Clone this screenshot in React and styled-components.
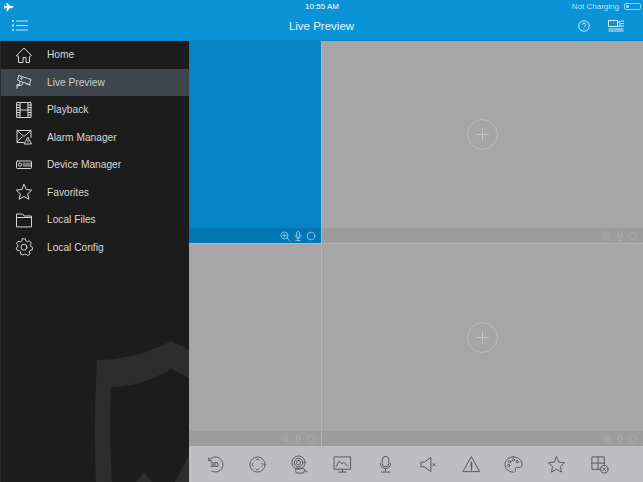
import React from 'react';
import styled, { createGlobalStyle } from 'styled-components';
import { Plane } from 'lucide-react';

const GlobalStyle = createGlobalStyle`
  html, body {
    margin: 0;
    padding: 0;
    background: #a6a6a6;
    overflow: hidden;
  }
  * {
    box-sizing: border-box;
  }
`;

const Page = styled.div`
  width: 643px;
  height: 482px;
  display: flex;
  flex-direction: column;
  font-family: 'Liberation Sans', Arial, sans-serif;
  overflow: hidden;
`;

const Header = styled.header`
  height: 41px;
  flex: none;
  background: #0a94d7;
  color: #fff;
  display: flex;
  flex-direction: column;
  border-bottom: 1px solid #0a86c4;
`;

const StatusBar = styled.div`
  height: 13px;
  padding: 0 2px 0 3px;
  display: grid;
  grid-template-columns: 1fr auto 1fr;
  align-items: center;
  font-size: 8px;
`;

const StatusPlane = styled(Plane)`
  transform: rotate(45deg);
`;

const StatusRight = styled.div`
  display: flex;
  align-items: center;
  justify-content: flex-end;
  gap: 5px;
  color: #b9e0f3;
`;

const Battery = styled.span`
  width: 17px;
  height: 7px;
  border: 1px solid #8fcdea;
  border-radius: 2px;
  padding: 1px;
  display: flex;

  &::before {
    content: '';
    width: 3px;
    background: #8fcdea;
  }
`;

const NavBar = styled.div`
  flex: 1;
  display: grid;
  grid-template-columns: 1fr auto 1fr;
  align-items: center;
  padding: 0 19px 2px;
`;

const MenuButton = styled.svg`
  width: 17px;
  height: 13px;
  margin-left: -8px;
  stroke: #bfe3f5;
  fill: #e6f5fc;
`;

const Title = styled.div`
  font-size: 11.5px;
  line-height: 14px;
  color: #e9f6fc;
`;

const NavActions = styled.div`
  display: flex;
  justify-content: flex-end;
  align-items: center;
  gap: 18px;
`;

const Body = styled.div`
  flex: 1;
  display: flex;
  min-height: 0;
`;

const Sidebar = styled.aside`
  width: 189px;
  flex: none;
  background: #1c1c1d;
  border-left: 1px solid #2c2c2c;
  position: relative;
  overflow: hidden;
`;

const Menu = styled.nav`
  position: relative;
  display: flex;
  flex-direction: column;
`;

const MenuItem = styled.div`
  height: 27.5px;
  display: flex;
  align-items: center;
  gap: 14px;
  padding-left: 14px;
  font-size: 10.2px;
  color: ${(p) => (p.$active ? '#c8cccf' : '#d8d8d8')};
  background: ${(p) => (p.$active ? '#3e464b' : 'transparent')};
`;

const MenuIcon = styled.svg`
  width: 18px;
  height: 18px;
  flex: none;
  fill: none;
  stroke: #d4d4d4;
  stroke-width: 1;
  stroke-linejoin: round;
  stroke-linecap: round;
`;

const Shield = styled.svg`
  position: absolute;
  left: -1px;
  top: 0;
  width: 189px;
  height: 441px;
  fill: #2d2d2d;
`;

const Main = styled.main`
  flex: 1;
  display: flex;
  flex-direction: column;
  min-width: 0;
`;

const Grid = styled.div`
  flex: 1;
  display: grid;
  grid-template-columns: 132px 1fr;
  grid-template-rows: 1fr 1fr;
  gap: 1px;
  background: #b4b4b4;
  min-height: 0;
`;

const Cell = styled.div`
  display: flex;
  flex-direction: column;
  min-height: 0;
`;

const CellView = styled.div`
  flex: 1;
  display: flex;
  align-items: center;
  justify-content: center;
  background: ${(p) => (p.$selected ? '#0385c5' : '#a6a6a6')};
`;

const AddButton = styled.div`
  width: 31px;
  height: 31px;
  border-radius: 50%;
  border: 1px solid #bbbbbb;
  display: flex;
  align-items: center;
  justify-content: center;
  color: #c2c2c2;

  &::before {
    content: '';
    width: 13px;
    height: 13px;
    background:
      linear-gradient(currentColor, currentColor) center / 13px 1px no-repeat,
      linear-gradient(currentColor, currentColor) center / 1px 13px no-repeat;
  }
`;

const CellStrip = styled.div`
  height: 15px;
  flex: none;
  display: flex;
  align-items: center;
  justify-content: flex-end;
  gap: 3px;
  padding-right: 5px;
  background: ${(p) => (p.$selected ? '#0377b2' : '#9c9c9c')};
`;

const StripIcon = styled.svg`
  width: 10px;
  height: 10px;
  fill: none;
  stroke: ${(p) => (p.$selected ? '#7fc2e2' : '#a9a9a9')};
  stroke-width: 1;
  stroke-linecap: round;
`;

const Toolbar = styled.div`
  height: 36px;
  flex: none;
  background: #bdbdc2;
  display: grid;
  grid-template-columns: repeat(10, 42.8px);
  align-items: center;
  justify-items: center;
  padding-left: 4px;
`;

const ToolIcon = styled.svg`
  width: 19px;
  height: 19px;
  fill: none;
  stroke: #55565a;
  stroke-width: 1;
  stroke-linecap: round;
  stroke-linejoin: round;
`;

const ToolLabel = styled.text`
  font-family: 'Liberation Sans', Arial, sans-serif;
  font-size: 7px;
  font-weight: 700;
  fill: #55565a;
  stroke: none;
`;

const menu = [
  {
    label: 'Home',
    icon: <path d="M1.500 9.500 9 2l7.500 7.500-2 1.200V16.500h-3.500v-5h-3v5H3.500v-5.800z" />,
  },
  {
    label: 'Live Preview',
    active: true,
    icon: (
      <>
        <path d="M4 2.500l12 4-1.500 5-11.500-4z" />
        <path d="M6.500 4.800a.8.8 0 1 0 .1 0" />
        <path d="M5 8.500 4.500 11.500H2v4M2 13l5-1 1-2M11 10.500l1.500 1 3 .5" />
      </>
    ),
  },
  {
    label: 'Playback',
    icon: (
      <>
        <rect x="2" y="1.500" width="14" height="15" />
        <path d="M5 1.500v15M13 1.500v15M5 9h8M2 4h3M2 6.500h3M2 9h3M2 11.500h3M2 14h3M13 4h3M13 6.500h3M13 9h3M13 11.500h3M13 14h3" />
      </>
    ),
  },
  {
    label: 'Alarm Manager',
    icon: (
      <>
        <path d="M9 14.500H2v-12h14v7" />
        <path d="M2 2.500l7 6 7-6M2 14l5-5" />
        <path d="M13 9.500l3.500 6.500h-7zM13 12v2" />
      </>
    ),
  },
  {
    label: 'Device Manager',
    icon: (
      <>
        <rect x="1.500" y="5" width="15" height="7.500" rx="1" />
        <circle cx="5" cy="8.700" r="1.700" />
        <path d="M9 7v3.500M11 7v3.500M13 7v3.500M15 7v3.500" />
      </>
    ),
  },
  {
    label: 'Favorites',
    icon: <path d="M9 1.500l2.300 5 5.400.6-4 3.700 1.100 5.400L9 13.500l-4.800 2.700 1.100-5.400-4-3.700 5.400-.6z" />,
  },
  {
    label: 'Local Files',
    icon: (
      <>
        <path d="M1.500 15.500V3h6l1.500 2h7.500v10.500z" />
        <path d="M1.500 6.500h15" />
      </>
    ),
  },
  {
    label: 'Local Config',
    icon: (
      <>
        <path d="M7.500 1.500h3l.5 2.200 1.700.8 2-1 2 2.300-1.300 1.900.5 1.600 2 .9-.3 2.800-2.200.4-.9 1.600.8 2.100-2.400 1.700-1.700-1.500-1.700.1L8 18l-2.700-1 .3-2.300-1.200-1.200-2.200.3L1 11l1.800-1.400V8L1.300 6.300 3 4l2 .7 1.500-.9z" transform="translate(.2 -.6) scale(.97)" />
        <circle cx="9" cy="9.200" r="3" />
      </>
    ),
  },
];

const ZoomGlyph = () => (
  <>
    <circle cx="4.500" cy="4.500" r="3.500" />
    <path d="M7 7l2.500 2.500M3 4.500h3M4.500 3v3" />
  </>
);

const MicGlyph = () => (
  <>
    <rect x="3.500" y=".5" width="3" height="6" rx="1.500" />
    <path d="M2 4.500c0 4 6 4 6 0M5 7.500v2M3 9.500h4" />
  </>
);

const cells = [
  { id: 1, selected: true },
  { id: 2, add: true },
  { id: 3 },
  { id: 4, add: true },
];

const App = () => (
  <>
    <GlobalStyle />
    <Page>
      <Header>
        <StatusBar>
          <StatusPlane size={10} fill="#fff" strokeWidth={1} />
          <span>10:55 AM</span>
          <StatusRight>
            <span>Not Charging</span>
            <Battery />
          </StatusRight>
        </StatusBar>
        <NavBar>
          <MenuButton viewBox="0 0 17 13">
            <circle cx="2" cy="2" r="1" stroke="none" />
            <circle cx="2" cy="6.500" r="1" stroke="none" />
            <circle cx="2" cy="11" r="1" stroke="none" />
            <path d="M5 2h12M5 6.500h12M5 11h12" />
          </MenuButton>
          <Title>Live Preview</Title>
          <NavActions>
            <svg width="12" height="12" viewBox="0 0 12 12" fill="none" stroke="#cdeaf7">
              <circle cx="6" cy="6" r="5.300" />
              <path d="M4.300 4.700c0-2.300 3.500-2.200 3.500 0 0 1.300-1.800 1.300-1.800 2.700M6 8.500v1" />
            </svg>
            <svg width="16" height="13" viewBox="0 0 16 13" fill="none" stroke="#d6eef9">
              <rect x=".5" y="1.500" width="9" height="6" />
              <path d="M9.500 4l2.500-2v6L9.500 6M13 2h3M13 4.500h3M13 7h3M.5 10h15M.5 12h15" />
            </svg>
          </NavActions>
        </NavBar>
      </Header>
      <Body>
        <Sidebar>
          <Shield viewBox="0 41 189 441">
            <path d="M96 482C94 440 95 400 97 360 125 360 150 352 171 341L189 350V378L171 369C152 380 132 387 111 387 109 420 110 450 112 482Z" />
            <path d="M136 482 144 472 152 482Z" />
            <path d="M175 482 189 455V482Z" />
          </Shield>
          <Menu>
            {menu.map((item) => (
              <MenuItem key={item.label} $active={item.active}>
                <MenuIcon viewBox="0 0 18 18">{item.icon}</MenuIcon>
                {item.label}
              </MenuItem>
            ))}
          </Menu>
        </Sidebar>
        <Main>
          <Grid>
            {cells.map((cell) => (
              <Cell key={cell.id}>
                <CellView $selected={cell.selected}>{cell.add && <AddButton />}</CellView>
                <CellStrip $selected={cell.selected}>
                  <StripIcon viewBox="0 0 10 10" $selected={cell.selected}>
                    <ZoomGlyph />
                  </StripIcon>
                  <StripIcon viewBox="0 0 10 10" $selected={cell.selected}>
                    <MicGlyph />
                  </StripIcon>
                  <StripIcon viewBox="0 0 10 10" $selected={cell.selected}>
                    <circle cx="5" cy="5" r="3.800" />
                  </StripIcon>
                </CellStrip>
              </Cell>
            ))}
          </Grid>
          <Toolbar>
            <ToolIcon viewBox="0 0 20 20">
              <path d="M4 6a8 8 0 1 1 3 11" />
              <path d="M4 3v3h3" />
              <ToolLabel x="5.500" y="13">3D</ToolLabel>
            </ToolIcon>
            <ToolIcon viewBox="0 0 20 20">
              <circle cx="10" cy="10" r="8" />
              <path d="M8.500 5.500 10 4l1.500 1.500M8.500 14.500 10 16l1.500-1.500M5.500 8.500 4 10l1.500 1.500M14.500 8.500 16 10l-1.500 1.500" />
            </ToolIcon>
            <ToolIcon viewBox="0 0 20 20">
              <circle cx="9" cy="8" r="7" />
              <circle cx="9" cy="8" r="4.500" />
              <rect x="7" y="5.500" width="4" height="5" rx="2" />
              <rect x="6" y="14" width="9" height="5" rx="1.500" />
              <path d="M15 16l3 1.500" />
            </ToolIcon>
            <ToolIcon viewBox="0 0 20 20">
              <rect x="1.500" y="2" width="17" height="13" />
              <path d="M3.500 12l3-6 3 3.500 2-2 4 4.500M10 15v2.500M6 18h8" />
            </ToolIcon>
            <ToolIcon viewBox="0 0 20 20">
              <rect x="6.500" y="1.500" width="7" height="11" rx="3.500" />
              <path d="M4.500 9c0 7 11 7 11 0M10 14.500V17M5.500 18h9" />
            </ToolIcon>
            <ToolIcon viewBox="0 0 20 20">
              <path d="M2.500 7.500h3l7-5v15l-7-5h-3z" />
              <path d="M14.500 9l2.500 2.500M17 9l-2.500 2.500" />
            </ToolIcon>
            <ToolIcon viewBox="0 0 20 20">
              <path d="M10 2l8.500 15.500h-17z" />
              <path d="M10 7.500v5.500M10 14.500v1" strokeWidth="1.500" />
            </ToolIcon>
            <ToolIcon viewBox="0 0 20 20">
              <path d="M10 2c5 0 9 3.500 9 8 0 3-2.500 3.500-4.500 3-2-.5-3 1-2.500 2.500.5 1.500-.5 2.500-2 2.500-5 0-9-3.500-9-8s4-8 9-8z" />
              <circle cx="6" cy="7" r="1.200" />
              <circle cx="10" cy="5" r="1.200" />
              <circle cx="14" cy="7" r="1.200" />
              <circle cx="5" cy="11" r="1.200" />
            </ToolIcon>
            <ToolIcon viewBox="0 0 20 20">
              <path d="M10 2l2.500 5.500 6 .7-4.400 4 1.200 5.800L10 15l-5.300 3 1.200-5.800-4.400-4 6-.7z" />
            </ToolIcon>
            <ToolIcon viewBox="0 0 20 20">
              <path d="M11 15H2V2h13v9M2 8.500h13M8.500 2v13" />
              <circle cx="15" cy="15" r="4" />
              <path d="M13.500 13.500l3 3M16.500 13.500l-3 3" />
            </ToolIcon>
          </Toolbar>
        </Main>
      </Body>
    </Page>
  </>
);

export default App;
